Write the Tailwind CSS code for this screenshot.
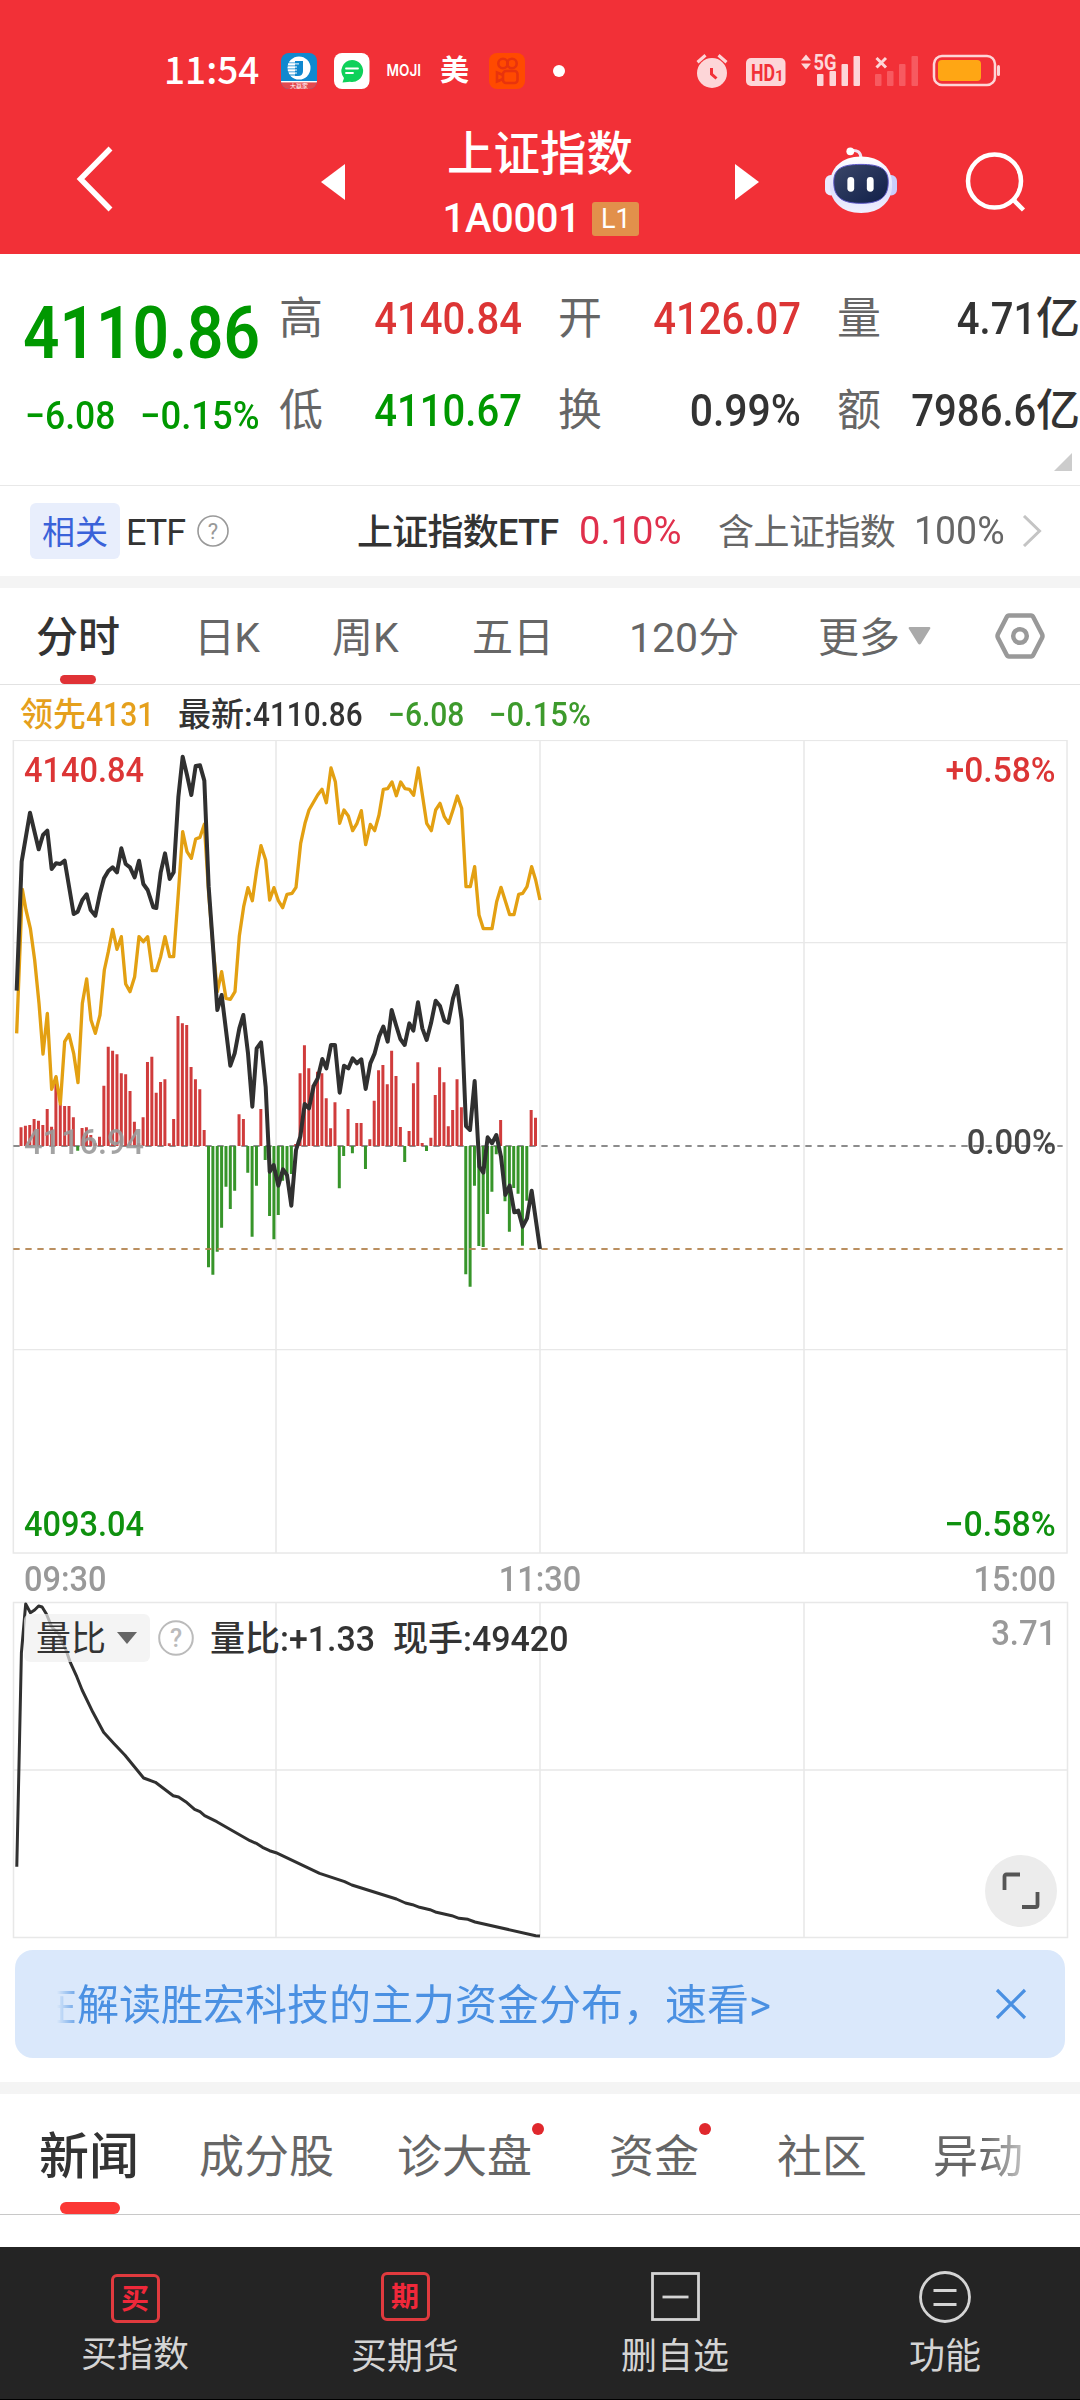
<!DOCTYPE html>
<html lang="zh-CN">
<head>
<meta charset="utf-8">
<title>上证指数</title>
<script src="https://cdn.jsdelivr.net/npm/@tailwindcss/browser@4"></script>
</head>
<body class="bg-white">
<div class="flex h-[2400px] w-[1080px] flex-col overflow-hidden bg-white font-['Roboto','Noto_Sans_CJK_SC',sans-serif] text-[#333] whitespace-nowrap">

  <!-- Header -->
  <header class="h-[254px] shrink-0 bg-[#f23037] text-white">
    <div class="flex h-[108px] items-center pt-[34px] pl-[164px]">
      <div class="mt-[-6px] w-[117px] text-[37px] leading-[38px] font-medium font-['Noto_Sans_CJK_SC',sans-serif]">11:54</div>
      <svg class="h-9 w-9" viewBox="0 0 36 36"><defs><clipPath id="r"><rect width="36" height="36" rx="8"/></clipPath></defs><g clip-path="url(#r)"><rect width="36" height="36" fill="#1088cf"/><rect y="29" width="36" height="7" fill="#e3494f"/><rect y="28" width="36" height="1.4" fill="#fff"/><circle cx="18" cy="15" r="11.5" fill="#fff"/><path d="M14 8h8v10q0 5-5 5h-3z" fill="#1088cf"/><path d="M7 10h12M6 13h11M6 16h11M6 19h11M8 22h8" stroke="#1088cf" stroke-width="1.1"/><path d="M7 10.9h11M7 14h9M7 17h9M8 20h8" stroke="#fff" stroke-width="1"/></g><text x="18" y="34.800" font-size="6" text-anchor="middle" fill="#fff">大赢家</text></svg>
      <svg class="ml-[17px] h-9 w-9" viewBox="0 0 36 36"><rect width="35.5" height="36" rx="8" fill="#fff"/><path d="M18 7a11 11 0 1 1-2 21.800l-7.500.7 1.500-4.500A11 11 0 0 1 18 7z" fill="#0ed15a"/><path d="M12 15.500h12M12 20h7" stroke="#fff" stroke-width="1.800" stroke-linecap="round"/></svg>
      <svg class="ml-4 mb-[2px] h-4 w-9" viewBox="0 0 36 16"><text x="0.500" y="14" font-family="Inter, sans-serif" font-size="16" font-weight="600" fill="#fff" textLength="34.500" lengthAdjust="spacingAndGlyphs">MOJI</text></svg>
      <div class="ml-[18px] w-[49px] text-[29px] leading-[36px] font-bold">美</div>
      <svg class="h-9 w-9" viewBox="0 0 36 36"><rect width="36" height="36" rx="8" fill="#ff4a00"/><g fill="none" stroke="#e8330d" stroke-width="2.600"><circle cx="14" cy="10.500" r="4.700"/><circle cx="23" cy="10.500" r="4.700"/><rect x="14" y="18" width="14.500" height="12" rx="3"/><path d="M14 22l-6-2.500v9l6-2.500"/></g></svg>
      <div class="ml-7 h-3 w-3 rounded-full bg-white"></div>
      <svg class="ml-[131px] h-9 w-[308px] overflow-visible" viewBox="696 53 308 36">
        <g fill="#fdd6d8"><circle cx="712" cy="73" r="15"/><path d="M696.500 61l8-7 2 2.500-8 7zM727.500 61l-8-7-2 2.500 8 7z"/><rect x="746" y="58" width="39.500" height="28" rx="5"/>
        <path d="M801 60.500l5-6 5 6zM801 63.500l5 6 5-6z"/><rect x="817" y="74" width="6.500" height="12" rx="1"/><rect x="829.500" y="71" width="6.500" height="15" rx="1"/><rect x="841.500" y="64" width="6.500" height="22" rx="1"/><rect x="853.500" y="56" width="6.500" height="30" rx="1"/></g>
        <path d="M711.500 68v6l5 4.500" fill="none" stroke="#f23037" stroke-width="3"/>
        <text x="751" y="80.500" font-size="23" font-weight="700" fill="#f23037" textLength="24" lengthAdjust="spacingAndGlyphs">HD</text><text x="775" y="80.500" font-size="15" font-weight="700" fill="#f23037">1</text>
        <text x="813.500" y="69.500" font-size="22" font-weight="700" fill="#fdd6d8" textLength="23" lengthAdjust="spacingAndGlyphs">5G</text>
        <path d="M876.500 58l9.500 9.500M886 58l-9.500 9.500" stroke="#fdd6d8" stroke-width="3"/>
        <g fill="#f75a60"><rect x="875" y="74" width="6.500" height="12" rx="1"/><rect x="887" y="71" width="6.500" height="15" rx="1"/><rect x="899" y="64" width="6.500" height="22" rx="1"/><rect x="911.500" y="56" width="6.500" height="30" rx="1"/></g>
        <rect x="934" y="56" width="61" height="29" rx="8" fill="none" stroke="#fdd6d8" stroke-width="2.500"/><rect x="938" y="60" width="43" height="21" rx="4" fill="#ffa614"/><rect x="997" y="65" width="3" height="11" rx="1.500" fill="#fdd6d8"/>
      </svg>
    </div>
    <div class="flex h-[146px] items-start">
      <svg class="ml-[72px] mt-[38px] h-[66px] w-[44px]" viewBox="0 0 44 66" fill="none" stroke="#fff" stroke-width="5.500"><path d="M38.500 2.500L8.500 33l30 30.500"/></svg>
      <svg class="ml-[205px] mt-[56px] h-9 w-6" viewBox="0 0 24 36"><path d="M24 0v36L0 18z" fill="#fff"/></svg>
      <div class="flex w-[390px] flex-col items-center pt-[20px]">
        <div class="text-[46.500px] leading-[52px] font-medium">上证指数</div>
        <div class="mt-[14px] flex items-center gap-[12px] pl-[2px]">
          <span class="text-[40px] leading-[50px] font-medium tracking-[-0.01em]">1A0001</span>
          <span class="h-[34px] w-[47px] rounded-[3px] bg-[#e2904b] text-center text-[27px] leading-[34px]">L1</span>
        </div>
      </div>
      <svg class="mt-[56px] h-9 w-6" viewBox="0 0 24 36"><path d="M0 0v36l24-18z" fill="#fff"/></svg>
      <svg class="ml-[66px] mt-[36px] h-[70px] w-[72px]" viewBox="0 0 74 70">
        <defs><linearGradient id="hd" x1="0" y1="0" x2="0" y2="1"><stop offset="0" stop-color="#fff"/><stop offset=".6" stop-color="#dfe0fb"/><stop offset="1" stop-color="#f0f0ff"/></linearGradient><linearGradient id="fc" x1="0" y1="0" x2="1" y2="1"><stop offset="0" stop-color="#3a4668"/><stop offset="1" stop-color="#101f49"/></linearGradient></defs>
        <path d="M26 6q11-2 11 8" fill="none" stroke="#f0e4f4" stroke-width="3"/><circle cx="26" cy="6.500" r="4" fill="#fff"/>
        <rect x="0" y="31" width="12" height="21" rx="6" fill="#eceaff"/><rect x="62" y="31" width="12" height="21" rx="6" fill="#c9cdfb"/>
        <path d="M37 12c20 0 32 12 32 29S57 70 37 70 5 58 5 41s12-29 32-29z" fill="url(#hd)"/>
        <path d="M37 20c19 0 28 4 28 18 0 16-9 22-28 22S9 54 9 38c0-14 9-18 28-18z" fill="url(#fc)" stroke="#5b55c8"/>
        <rect x="23" y="33" width="7" height="15" rx="3.500" fill="#fff"/><rect x="43" y="33" width="7" height="15" rx="3.500" fill="#fff"/>
      </svg>
      <svg class="ml-[68px] mt-[42px] h-[66px] w-[66px]" viewBox="0 0 66 66" fill="none" stroke="#fff" stroke-width="4.500"><circle cx="29.500" cy="31" r="26.500"/><path d="M48 49.500L58.500 60"/></svg>
    </div>
  </header>

  <!-- Quote -->
  <section class="flex h-[231px] shrink-0 pl-[25px]">
    <div class="w-[254px] pt-[38px] text-[#009800]">
      <div class="ml-[-2px] w-[254px] origin-left scale-x-[.875] text-[73px] leading-[82px] font-semibold">4110.86</div>
      <div class="mt-[20px] flex text-[39px] leading-[44px] font-medium"><span class="w-[115px] origin-left scale-x-[.91]">−6.08</span><span class="origin-left scale-x-[.935]">−0.15%</span></div>
    </div>
    <div class="grid h-[185px] grid-cols-[42px_201px_36px_42px_201px_36px_42px_201px] grid-rows-[93px_92px] items-center pt-[18px] text-[44px] leading-[60px] font-medium">
      <span class="font-normal text-[#666]">高</span><span class="origin-right scale-x-[.91] text-right text-[#dc3535]">4140.84</span><i></i>
      <span class="font-normal text-[#666]">开</span><span class="origin-right scale-x-[.91] text-right text-[#dc3535]">4126.07</span><i></i>
      <span class="font-normal text-[#666]">量</span><span class="flex justify-end"><span class="origin-right scale-x-[.91]">4.71</span>亿</span>
      <span class="font-normal text-[#666]">低</span><span class="origin-right scale-x-[.91] text-right text-[#009800]">4110.67</span><i></i>
      <span class="font-normal text-[#666]">换</span><span class="origin-right scale-x-[.93] text-right">0.99%</span><i></i>
      <span class="font-normal text-[#666]">额</span><span class="flex justify-end"><span class="origin-right scale-x-[.91]">7986.6</span>亿</span>
    </div>
    <svg class="ml-[-26px] mt-[199px] h-[18px] w-[18px] shrink-0" viewBox="0 0 18 18"><path d="M18 0v18H0z" fill="#ccc"/></svg>
  </section>

  <!-- Related ETF -->
  <section class="flex h-[91px] shrink-0 items-center border-t border-[#e8e8e8] pl-[30px] text-[36px] leading-[44px]">
    <span class="h-14 w-[90px] rounded-[6px] bg-[#e8eefc] text-center text-[33px] leading-[60px] text-[#3a62d9]">相关</span>
    <span class="mt-[3px] ml-[6px] w-[71px] tracking-[-0.03em]">ETF</span>
    <svg class="h-8 w-8" viewBox="0 0 32 32"><circle cx="16" cy="16" r="15" fill="none" stroke="#999" stroke-width="1.600"/><text x="16" y="24" text-anchor="middle" font-size="22" fill="#999">?</text></svg>
    <span class="mt-[3px] ml-[128px] w-[222px] font-medium tracking-[-0.02em]">上证指数ETF</span>
    <span class="w-[139px] origin-left scale-x-[.98] text-[39px] text-[#e0304c]">0.10%</span>
    <span class="mt-[4px] w-[196px] tracking-[-0.015em] text-[#666]">含上证指数</span>
    <span class="w-[108px] origin-left scale-x-[.96] text-[39px] text-[#666]">100%</span>
    <svg class="h-8 w-5" viewBox="0 0 20 32" fill="none" stroke="#c4c4c4" stroke-width="3"><path d="M2 1l15.500 15L2 31"/></svg>
  </section>
  <div class="h-3 shrink-0 bg-[#f4f4f4]"></div>

  <!-- Period tabs -->
  <nav class="flex h-[97px] shrink-0 border-b border-[#e2e2e2] pl-[36px] text-[41px] leading-[100px] text-[#666]">
    <div class="relative h-24 w-[158px] text-[42px] font-medium text-[#333]">分时<div class="absolute bottom-0 left-6 h-[9px] w-9 rounded-full bg-[#e03236]"></div></div>
    <div class="w-[138px] tracking-[-0.02em]">日K</div>
    <div class="w-[140px]">周K</div>
    <div class="w-[157px]">五日</div>
    <div class="w-[189px]">120分</div>
    <div class="w-[90px]">更多</div>
    <svg class="mt-[39px] h-[18px] w-[23px]" viewBox="0 0 23 18"><path d="M1.500 0h20q1.500.5.5 2L13 16.500q-1.500 2-3 0L1 2Q0 .5 1.500 0z" fill="#aaa"/></svg>
    <svg class="ml-[64px] mt-6 h-12 w-[50px]" viewBox="0 0 50 48" fill="none" stroke="#999" stroke-width="4.500" stroke-linejoin="round"><path d="M14 3.500h22q1.500 0 2.500 2L47 22q1 2 0 4l-8.500 16.500q-1 2-2.500 2H14q-1.500 0-2.500-2L3 26q-1-2 0-4l8.500-16.500q1-2 2.500-2z"/><circle cx="25" cy="24" r="6.800"/></svg>
  </nav>

  <!-- Intraday legend -->
  <div class="flex h-[55px] shrink-0 items-center pt-[4px] pl-[20px] text-[33px] leading-[55px] font-medium">
    <span class="flex w-[158px] text-[#e5a01c]">领先<span class="origin-left scale-x-[.91]">4131</span></span>
    <span class="flex w-[210px]">最新:<span class="origin-left scale-x-[.9]">4110.86</span></span>
    <span class="w-[101px] origin-left scale-x-[.91] text-[#3d9a2c]">−6.08</span>
    <span class="origin-left scale-x-[.94] text-[#3d9a2c]">−0.15%</span>
  </div>

  <!-- Intraday chart -->
  <section class="relative h-[814px] shrink-0 text-[35px] leading-[36px] font-medium">
    <svg class="block h-[814px] w-[1080px]" viewBox="0 180 3240 2442">
      <g fill="none" stroke="#e8e8e8" stroke-width="4.500"><rect x="40" y="181" width="3161" height="2438"/><path d="M828 181v2438M1620 181v2438M2412 181v2438" /><path d="M40 788h3161M40 2009h3161" stroke-width="4"/></g>
      <path d="M40 1398h3148" stroke="#8c8c8c" stroke-width="6" stroke-dasharray="19 17"/>
      <path id="up" fill="none" stroke="#d03c3c" stroke-width="9"/>
      <path id="down" fill="none" stroke="#37952a" stroke-width="9"/>
      <path d="M40 1707h3148" stroke="#b3834f" stroke-opacity=".9" stroke-width="6" stroke-dasharray="19 17"/>
      <polyline fill="none" stroke="#e3a012" stroke-width="10" stroke-linejoin="round" points="50,1060 67,628 78,690 91,745 104,840 117,970 129,1122 142,1000 155,1228 168,1190 181,1272 194,1085 207,1063 221,1120 234,1208 247,970 260,897 273,1020 286,1060 300,1005 313,870 325,815 338,748 351,808 364,770 377,912 390,935 404,890 417,770 430,785 443,770 457,872 469,872 482,830 495,770 509,830 521,830 535,640 548,455 561,515 574,535 587,477 600,472 613,433 626,640 639,800 652,935 665,875 678,955 691,958 705,935 718,768 731,680 744,623 757,662 770,570 783,497 797,540 809,660 822,623 835,662 848,683 861,643 876,640 888,622 902,490 915,430 927,390 953,345 966,328 979,368 993,264 1006,305 1019,430 1032,390 1045,408 1058,452 1071,430 1084,392 1097,494 1111,433 1124,452 1137,405 1150,328 1163,326 1176,306 1189,347 1202,306 1215,326 1228,328 1241,346 1255,264 1268,350 1280,430 1294,452 1307,390 1320,370 1333,410 1346,430 1359,390 1372,348 1385,385 1398,620 1411,620 1424,560 1437,705 1450,746 1476,746 1490,665 1503,622 1529,704 1542,704 1556,643 1568,640 1581,620 1595,560 1607,600 1620,660"/>
      <polyline fill="none" stroke="#303030" stroke-width="12" stroke-linejoin="round" points="50,932 65,545 90,398 116,508 129,465 142,452 155,567 168,550 181,552 194,542 221,702 233,695 247,660 260,643 272,690 286,707 300,640 312,595 325,573 338,562 351,577 364,505 377,552 390,562 404,592 417,542 430,612 443,630 460,682 469,684 482,578 495,520 509,597 521,577 535,352 548,230 561,285 574,345 587,258 600,256 613,302 626,620 639,800 652,990 665,945 691,1157 704,1120 718,1045 730,1005 744,1120 757,1280 770,1105 783,1087 797,1220 809,1475 821,1455 835,1517 849,1468 861,1485 874,1577 888,1410 901,1370 914,1272 927,1285 941,1218 953,1195 967,1137 979,1165 993,1095 1005,1095 1019,1238 1032,1157 1045,1165 1058,1135 1071,1150 1084,1138 1097,1227 1111,1150 1124,1120 1137,1070 1150,1040 1163,1085 1175,990 1188,1035 1201,1077 1214,1095 1228,1030 1240,1052 1254,967 1267,1045 1280,1080 1293,1030 1307,962 1320,978 1333,1022 1345,1028 1359,955 1371,918 1385,1020 1398,1338 1410,1350 1424,1203 1438,1460 1450,1478 1463,1372 1476,1390 1489,1365 1503,1430 1516,1545 1529,1517 1543,1597 1555,1592 1568,1640 1581,1615 1595,1532 1620,1707"/>
    </svg>
    <span class="absolute left-6 top-[13px] origin-left scale-x-[.93] text-[#dc3535]">4140.84</span>
    <span class="absolute right-6 top-[13px] origin-right scale-x-[.96] text-[#dc3535]">+0.58%</span>
    <span class="absolute left-6 top-[385px] origin-left scale-x-[.93] text-[#999]/90">4116.94</span>
    <span class="absolute right-6 top-[385px] origin-right scale-x-[.94] text-[#333]/90">0.00%</span>
    <span class="absolute left-6 top-[767px] origin-left scale-x-[.93] text-[#0f910f]">4093.04</span>
    <span class="absolute right-6 top-[767px] origin-right scale-x-[.97] text-[#0f910f]">−0.58%</span>
  </section>
  <div class="grid h-[47px] shrink-0 grid-cols-3 px-6 text-[35px] leading-[51px] font-medium text-[#999]">
    <span class="origin-left scale-x-[.93]">09:30</span><span class="origin-center scale-x-[.93] text-center">11:30</span><span class="origin-right scale-x-[.93] text-right">15:00</span>
  </div>

  <!-- Volume ratio chart -->
  <section class="relative h-[349px] shrink-0">
    <svg class="block h-[338px] w-[1080px]" viewBox="0 1601 1080 338" fill="none">
      <path d="M13.500 1602.500h1054v335h-1054zM276 1602v335M540 1602v335M804 1602v335M13 1770h1054" stroke="#e8e8e8" stroke-width="1.500"/>
      <polyline stroke="#303030" stroke-width="3" stroke-linejoin="round" points="16.8,1866.7 21.400,1653 25.700,1604 30.400,1612.700 34.600,1610 38.600,1606 42.100,1607 46.400,1614 51.800,1627 58.900,1634 66,1650 70.400,1662.700 76.800,1676.700 82.100,1690 92.900,1712.300 103.600,1732.300 113.600,1743.300 125,1755.300 143.600,1778 155.400,1782.300 173.200,1795.700 178.600,1797 185.700,1801.700 194.600,1809.300 200,1811.700 204.600,1815.700 216.800,1821.700 250,1840.700 257,1843.700 262.500,1847.300 269.600,1850.700 276,1852.700 319.600,1873.300 344.600,1881.700 351.800,1885 396.400,1899 405.400,1903 412.500,1904.700 419.600,1907.300 430,1909.700 436.400,1912.300 451.800,1915.700 459,1918.300 467.900,1919.300 475,1922 535.700,1935.700 540,1936"/>
    </svg>
    <div class="absolute left-6 top-[13px] flex h-12 items-center text-[35px] leading-[48px] font-medium">
      <div class="flex h-12 w-[126px] items-center rounded-[6px] bg-[#f0f0f0]/70 pl-[12px] pt-[4px] font-normal">量比<svg class="ml-[11px] mb-[4px] h-3 w-5" viewBox="0 0 20 12"><path d="M0 0h20L10 12z" fill="#666"/></svg></div>
      <svg class="ml-2 h-9 w-9" viewBox="0 0 36 36"><circle cx="18" cy="18" r="16.800" fill="none" stroke="#bbb" stroke-width="2"/><text x="18" y="27" text-anchor="middle" font-size="25" fill="#bbb">?</text></svg>
      <span class="ml-[16px] flex w-[183px] pt-[4px]">量比<span class="origin-left scale-x-[.97]">:+1.33</span></span>
      <span class="flex pt-[4px]">现手<span class="origin-left scale-x-[.97]">:49420</span></span>
    </div>
    <span class="absolute right-6 top-[15px] origin-right scale-x-[.94] text-[35px] leading-[36px] font-medium text-[#999]">3.71</span>
    <div class="absolute left-[985px] top-[254px] flex h-[72px] w-[72px] items-center justify-center rounded-full bg-[#ececec]">
      <svg class="h-10 w-10" viewBox="0 0 40 40" fill="none" stroke="#555" stroke-width="3.800"><path d="M3.500 19V5.500Q3.500 3.500 5.500 3.500H19M21 36h13.500q2 0 2-2V21"/></svg>
    </div>
  </section>

  <!-- Banner -->
  <section class="mx-[15px] flex h-[108px] shrink-0 items-center rounded-[18px] bg-[#dae8fb] text-[#4a90e2]">
    <div class="ml-[42px] flex h-[108px] w-[800px] justify-start overflow-hidden text-[42px] leading-[112px] [mask-image:linear-gradient(to_right,transparent,black_25px)]"><span class="ml-[-22px]">在解读胜宏科技的主力资金分布，速看&gt;</span></div>
    <svg class="ml-[138px] h-8 w-8" viewBox="0 0 32 32" stroke="#4a90e2" stroke-width="3.200"><path d="M2 2l28 28M30 2L2 30"/></svg>
  </section>
  <div class="mt-6 h-3 shrink-0 bg-[#f4f4f4]"></div>

  <!-- Content tabs -->
  <nav class="flex h-[121px] shrink-0 border-b border-[#c8c8c8] pl-[39px] text-[45px] leading-[127px] text-[#666]">
    <div class="relative h-[120px] w-[160px] text-[50px] font-medium text-[#333]">新闻<div class="absolute bottom-0 left-[21px] h-3 w-[60px] rounded-full bg-[#fb3835]"></div></div>
    <div class="w-[198px]">成分股</div>
    <div class="relative w-[212px]">诊大盘<div class="absolute top-[29px] left-[135px] h-3 w-3 rounded-full bg-[#e0282d]"></div></div>
    <div class="relative w-[168px]">资金<div class="absolute top-[29px] left-[90px] h-3 w-3 rounded-full bg-[#e0282d]"></div></div>
    <div class="w-[156px]">社区</div>
    <div class="h-[120px] [mask-image:linear-gradient(to_right,black_50px,rgba(0,0,0,.4))]">异动</div>
  </nav>
  <div class="h-8 shrink-0"></div>

  <!-- Bottom bar -->
  <footer class="grid h-[153px] shrink-0 grid-cols-4 border-b border-black bg-[#242424] text-center text-[36px] leading-[42px] text-[#d4d4d4]">
    <div class="flex flex-col items-center pt-[27px]"><div class="h-[49px] w-[49px] rounded-[6px] border-3 border-[#e03a3e] text-[28px] leading-[45px] font-bold text-[#f0283a]">买</div><div class="mt-[11px]">买指数</div></div>
    <div class="flex flex-col items-center pt-[25px]"><div class="h-[49px] w-[49px] rounded-[6px] border-3 border-[#e03a3e] text-[28px] leading-[45px] font-bold text-[#f0283a]">期</div><div class="mt-[15px]">买期货</div></div>
    <div class="flex flex-col items-center pt-[25px]"><svg class="h-[49px] w-[49px]" viewBox="0 0 49 49" fill="none" stroke="#d4d4d4" stroke-width="2.800"><rect x="1.500" y="1.500" width="46" height="46"/><path d="M11.500 25h26"/></svg><div class="mt-[15px]">删自选</div></div>
    <div class="flex flex-col items-center pt-[24px]"><svg class="h-[52px] w-[52px]" viewBox="0 0 52 52" fill="none" stroke="#d4d4d4" stroke-width="2.800"><circle cx="26" cy="26" r="24.500"/><path d="M14.500 19.500h23M14.500 33.500h23"/></svg><div class="mt-[13px]">功能</div></div>
  </footer>
</div>
<script>
  // One bar per minute: positive values rise above the zero line, negative ones hang below it.
  const bars = [56,61,63,81,76,63,111,58,208,126,120,120,86,-14,54,56,33,8,28,181,298,286,275,218,215,165,73,8,86,252,268,160,192,200,8,81,390,368,363,237,200,170,48,-364,-386,-317,-245,-122,-189,-134,95,81,-80,-272,-119,111,-42,-210,-280,-207,-104,-82,-84,6,218,302,233,183,223,218,143,53,131,-127,-30,111,-22,69,69,-69,20,136,227,243,185,286,210,57,-48,45,188,251,9,-15,25,153,236,191,59,108,200,116,-385,-422,-119,-300,-303,-204,-137,-25,78,-166,-257,-126,-143,-299,-164,108,85];
  let up = '', down = '';
  bars.forEach((v, i) => {
    const x = (63.1 + i * 13.08).toFixed(1);
    if (v > 0) up += `M${x} 1398V${1398 - v}`; else down += `M${x} 1398V${1398 - v}`;
  });
  document.getElementById('up').setAttribute('d', up);
  document.getElementById('down').setAttribute('d', down);
</script>
</body>
</html>
